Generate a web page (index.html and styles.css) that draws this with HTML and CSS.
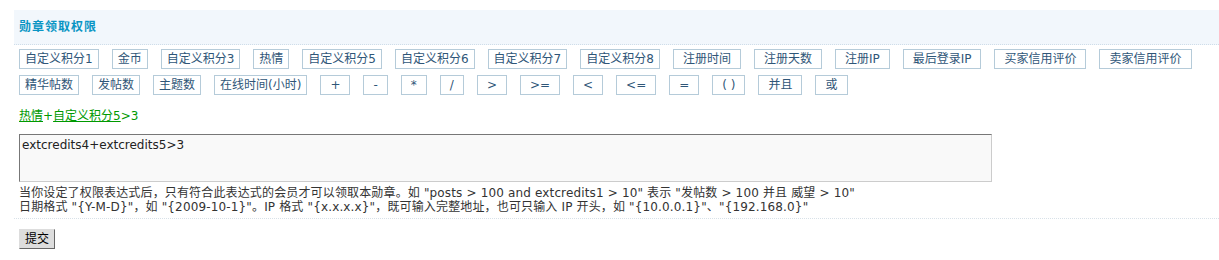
FILE: index.html
```html
<!DOCTYPE html>
<html lang="zh-CN">
<head>
<meta charset="utf-8">
<title>勋章领取权限</title>
<link rel="stylesheet" href="styles.css">
</head>
<body>
<div class="page">
  <div class="partition">勋章领取权限</div>
  <div class="section">
    <div class="btnrow">
      <a class="tok">自定义积分1</a>
      <a class="tok">金币</a>
      <a class="tok">自定义积分3</a>
      <a class="tok">热情</a>
      <a class="tok">自定义积分5</a>
      <a class="tok">自定义积分6</a>
      <a class="tok">自定义积分7</a>
      <a class="tok">自定义积分8</a>
      <a class="tok wide">注册时间</a>
      <a class="tok wide">注册天数</a>
      <a class="tok wide">注册IP</a>
      <a class="tok wide">最后登录IP</a>
      <a class="tok wide">买家信用评价</a>
      <a class="tok wide">卖家信用评价</a>
    </div>
    <div class="btnrow">
      <a class="tok">精华帖数</a>
      <a class="tok">发帖数</a>
      <a class="tok">主题数</a>
      <a class="tok">在线时间(小时)</a>
      <a class="tok op">+</a>
      <a class="tok op">-</a>
      <a class="tok op">*</a>
      <a class="tok op">/</a>
      <a class="tok op">&gt;</a>
      <a class="tok op">&gt;=</a>
      <a class="tok op">&lt;</a>
      <a class="tok op">&lt;=</a>
      <a class="tok op">=</a>
      <a class="tok op">(&nbsp;)</a>
      <a class="tok wide">并且</a>
      <a class="tok wide">或</a>
    </div>
    <div class="preview"><u>热情</u>+<u>自定义积分5</u>&gt;3</div>
    <textarea class="expr">extcredits4+extcredits5>3</textarea>
    <div class="tips">当你设定了权限表达式后，只有符合此表达式的会员才可以领取本勋章。如 "posts &gt; 100 and extcredits1 &gt; 10" 表示 "发帖数 &gt; 100 并且 威望 &gt; 10"<br>日期格式 "{Y-M-D}"，如 "{2009-10-1}"。IP 格式 "{x.x.x.x}"，既可输入完整地址，也可只输入 IP 开头，如 "{10.0.0.1}"、"{192.168.0}"</div>
  </div>
  <div class="submitrow"><button class="btn" type="button">提交</button></div>
</div>
</body>
</html>
```
FILE: styles.css
```css
html, body {
  margin: 0;
  padding: 0;
  background: #fff;
}
body {
  font-family: "DejaVu Sans", "Noto Sans CJK SC", sans-serif;
  font-size: 12px;
  color: #333;
}
.page {
  padding: 10px 0 0 14px;
}
.partition {
  height: 34px;
  line-height: 34px;
  padding-left: 5px;
  background: #F2F7FC;
  border-bottom: 1px dotted #cfdde9;
  color: #0A95C4;
  font-weight: 700;
  letter-spacing: 1px;
}
.section {
  padding-left: 5px;
  border-bottom: 1px dotted #d8e1e8;
  padding-bottom: 4px;
}
.btnrow {
  display: flex;
  flex-wrap: nowrap;
  gap: 13px;
  margin-top: 4px;
}
.btnrow + .btnrow {
  margin-top: 6px;
}
.tok {
  display: block;
  height: 18px;
  line-height: 18px;
  padding: 0 5px;
  border: 1px solid #B5CBD9;
  color: #2F5678;
  white-space: nowrap;
  cursor: pointer;
}
.tok.op {
  padding: 0 9px;
}
.tok.wide {
  padding: 0 9px;
}
.preview {
  margin-top: 14px;
  line-height: 14px;
  color: #090;
}
.preview u {
  text-decoration: underline;
}
.expr {
  display: block;
  box-sizing: border-box;
  width: 973px;
  height: 48px;
  margin: 11px 0 0 0;
  padding: 3px 2px;
  border: 1px solid;
  border-color: #777 #ccc #ccc #777;
  background: #F9F9F9;
  font-family: "DejaVu Sans", "Noto Sans CJK SC", sans-serif;
  font-size: 12px;
  line-height: 14px;
  color: #222;
  resize: none;
}
.tips {
  margin-top: 4px;
  line-height: 14px;
  color: #333;
  white-space: nowrap;
  letter-spacing: 0.15px;
}
.submitrow {
  padding: 10px 0 0 5px;
}
.btn {
  box-sizing: border-box;
  height: 20px;
  padding: 0 5px;
  border: 1px solid;
  border-color: #DDD #666 #666 #DDD;
  background: #DDD;
  color: #000;
  font-family: "DejaVu Sans", "Noto Sans CJK SC", sans-serif;
  font-size: 12px;
  line-height: 18px;
  cursor: pointer;
}
```
